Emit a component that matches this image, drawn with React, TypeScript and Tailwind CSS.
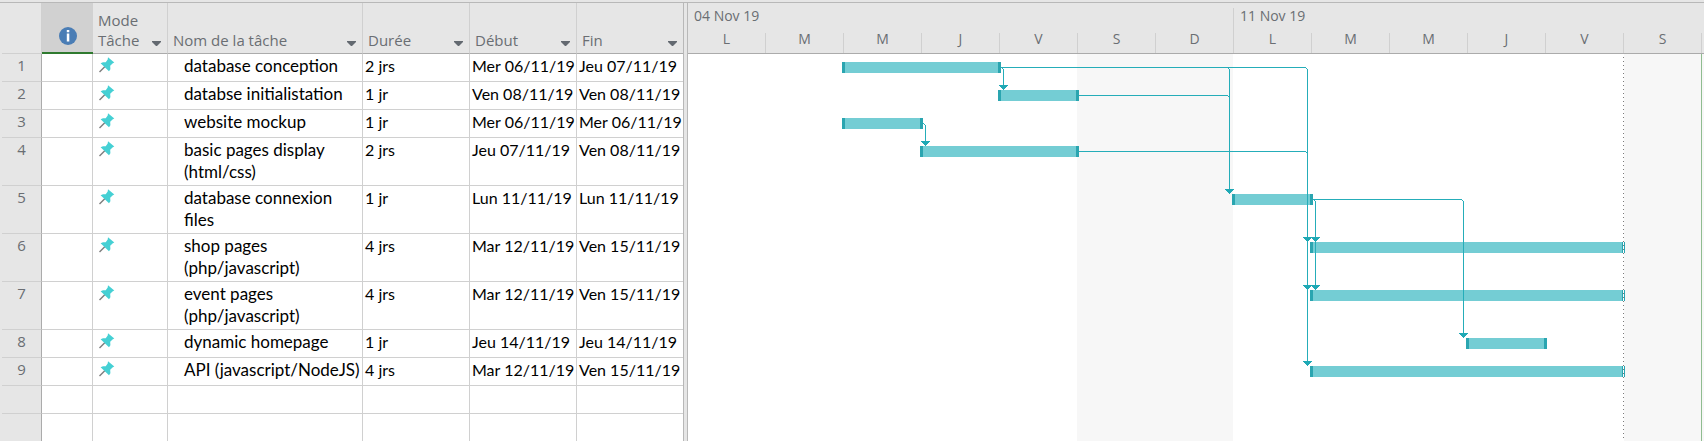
import React from "react";

type Task = {
  id: number;
  name: string;
  duration: string;
  start: string;
  end: string;
  tall?: boolean;
};

const tasks: Task[] = [
  { id: 1, name: "database conception", duration: "2 jrs", start: "Mer 06/11/19", end: "Jeu 07/11/19" },
  { id: 2, name: "databse initialistation", duration: "1 jr", start: "Ven 08/11/19", end: "Ven 08/11/19" },
  { id: 3, name: "website mockup", duration: "1 jr", start: "Mer 06/11/19", end: "Mer 06/11/19" },
  { id: 4, name: "basic pages display (html/css)", duration: "2 jrs", start: "Jeu 07/11/19", end: "Ven 08/11/19", tall: true },
  { id: 5, name: "database connexion files", duration: "1 jr", start: "Lun 11/11/19", end: "Lun 11/11/19", tall: true },
  { id: 6, name: "shop pages (php/javascript)", duration: "4 jrs", start: "Mar 12/11/19", end: "Ven 15/11/19", tall: true },
  { id: 7, name: "event pages (php/javascript)", duration: "4 jrs", start: "Mar 12/11/19", end: "Ven 15/11/19", tall: true },
  { id: 8, name: "dynamic homepage", duration: "1 jr", start: "Jeu 14/11/19", end: "Jeu 14/11/19" },
  { id: 9, name: "API (javascript/NodeJS)", duration: "4 jrs", start: "Mar 12/11/19", end: "Ven 15/11/19" },
];

const weeks = [
  { label: "04 Nov 19", days: ["L", "M", "M", "J", "V", "S", "D"] },
  { label: "11 Nov 19", days: ["L", "M", "M", "J", "V", "S"] },
];

const DAY = 78;

// Chart coordinates: x = 0 is Monday 04/11, y = 0 is the top of the first row.
const bars = [
  { id: 1, day: 2, span: 2, y: 8 },
  { id: 2, day: 4, span: 1, y: 36 },
  { id: 3, day: 2, span: 1, y: 64 },
  { id: 4, day: 3, span: 2, y: 92 },
  { id: 5, day: 7, span: 1, y: 140 },
  { id: 6, day: 8, span: 4, y: 188, atDeadline: true },
  { id: 7, day: 8, span: 4, y: 236, atDeadline: true },
  { id: 8, day: 10, span: 1, y: 284 },
  { id: 9, day: 8, span: 4, y: 312, atDeadline: true },
];

const links = [
  "M312 13H617L619 15V308",
  "M313 13L315 15V32",
  "M313 13H539L541 15V136",
  "M390 41H539L541 43",
  "M235 69L237 71V88",
  "M390 97H617L619 99",
  "M624 145H773L775 147V280",
  "M625 145L627 147V232",
];

const arrows = [
  [315, 31],
  [237, 87],
  [541, 135],
  [619, 183],
  [627, 183],
  [619, 231],
  [627, 231],
  [775, 279],
  [619, 307],
];

function Pin() {
  return (
    <svg width="16" height="16" viewBox="0 0 16 16" role="img" aria-label="Planifié manuellement" className="block">
      <path d="M0.5 15 L6 9.5" stroke="#7d7d7d" strokeWidth="1.5" />
      <path d="M9 0.3 L15.3 5.6 L13.8 6.2 L11.2 8.8 L11.4 12.2 L10 14.2 L1.6 6.2 L4 5.2 L6.7 5.2 L8.7 2.6 Z" fill="#45d0d4" />
    </svg>
  );
}

function HeaderCell({ label, className = "" }: { label: string; className?: string }) {
  return (
    <th scope="col" className={`h-[51px] border-r border-b border-r-[#d0d0d0] border-b-[#ababab] p-0 text-left align-bottom font-normal ${className}`}>
      <div className="flex items-end justify-between pr-1.5 pb-[3px] pl-[5px]">
        <span className="leading-5">{label}</span>
        <button type="button" aria-label={`Filtrer ${label}`} className="flex h-5 shrink-0 items-center pt-1.5">
          <svg width="9" height="5" viewBox="0 0 9 5" aria-hidden="true">
            <path d="M0 0H9V1L5 5H4L0 1Z" fill="#636970" />
          </svg>
        </button>
      </div>
    </th>
  );
}

function TaskTable() {
  const base = "border-r border-b border-[#d0d0d0] p-0 align-top";
  const cell = `${base} pt-px`;
  return (
    <div className="shrink-0 border-r border-[#b8b8b8] bg-white">
      <table className="w-[681px] table-fixed border-separate border-spacing-0 font-['Lato','Liberation_Sans',sans-serif] text-base leading-[22px] text-black">
        <colgroup>
          <col className="w-[40px]" />
          <col className="w-[51px]" />
          <col className="w-[75px]" />
          <col className="w-[195px]" />
          <col className="w-[107px]" />
          <col className="w-[107px]" />
          <col />
        </colgroup>
        <thead className="bg-[#e6e6e6] font-['Open_Sans','Noto_Sans',sans-serif] text-[15px] text-[#6a6e73]">
          <tr>
            <th className="border-r border-b border-r-[#d0d0d0] border-b-[#d0d0d0] p-0" aria-label="Ligne" />
            <th scope="col" className="border-b-2 border-[#2f7a2f] bg-[#d1d1d1] p-0 pt-6 align-top">
              <svg width="18" height="18" viewBox="0 0 18 18" role="img" aria-label="Indicateurs" className="mx-auto block">
                <circle cx="9" cy="9" r="9" fill="#4a7db5" />
                <path d="M7.8 3h2.5v2.2H7.8zM7.8 6.5h2.5v8H7.8z" fill="#fff" />
              </svg>
            </th>
            <HeaderCell label="Mode Tâche" />
            <HeaderCell label="Nom de la tâche" />
            <HeaderCell label="Durée" />
            <HeaderCell label="Début" />
            <HeaderCell label="Fin" className="border-r-0" />
          </tr>
        </thead>
        <tbody>
          {tasks.map((t) => (
            <tr key={t.id} className={t.tall ? "h-12" : "h-7"}>
              <th scope="row" className="border-r border-b border-r-[#ababab] border-b-[#d0d0d0] bg-[#e6e6e6] p-0 text-center align-top font-['Open_Sans','Noto_Sans',sans-serif] text-[15px] leading-[22px] font-normal text-[#6a6e73]">
                {t.id}
              </th>
              <td className={cell} />
              <td className={`${base} pt-[3px] pl-1.5`}>
                <Pin />
              </td>
              <td className={`${cell} pl-4 text-[17px]`}>{t.name}</td>
              <td className={`${cell} pl-0.5`}>{t.duration}</td>
              <td className={`${cell} pl-0.5 whitespace-nowrap`}>{t.start}</td>
              <td className={`${cell} border-r-0 pl-0.5 whitespace-nowrap`}>{t.end}</td>
            </tr>
          ))}
          {[10, 11].map((n) => (
            <tr key={n} className="h-7">
              <th className="border-r border-b border-r-[#ababab] border-b-[#d0d0d0] bg-[#e6e6e6] p-0" aria-label="Ligne vide" />
              {[0, 1, 2, 3, 4].map((c) => (
                <td key={c} className={cell} />
              ))}
              <td className={`${cell} border-r-0`} />
            </tr>
          ))}
        </tbody>
      </table>
    </div>
  );
}

function Chart() {
  return (
    <svg width="1017" height="387" viewBox="0 0 1017 387" shapeRendering="crispEdges" role="img" aria-label="Diagramme de Gantt" className="block">
      <rect x={5 * DAY - 1} y="0" width={2 * DAY} height="387" fill="#f7f7f7" />
      <rect x={12 * DAY} y="0" width="81" height="387" fill="#f7f7f7" />
      <path d="M1013.5 0V387" stroke="#8fbc8f" />
      {bars.map((b) => {
        const x = b.day * DAY - 2;
        const w = b.span * DAY + 3;
        return (
          <g key={b.id}>
            <rect x={x} y={b.y} width={w} height="11" fill="#74cdd4" />
            <rect x={x} y={b.y} width="3" height="11" fill="#2aa5b0" />
            <rect x={x + w - 3} y={b.y} width="3" height="11" fill="#2aa5b0" />
            {b.atDeadline && <path d={`M${x + w - 1.5} ${b.y}V${b.y + 11}`} stroke="#ffffff" />}
          </g>
        );
      })}
      <g transform="translate(0.5 0.5)" fill="none" stroke="#25adb9">
        {links.map((d) => (
          <path key={d} d={d} />
        ))}
      </g>
      {arrows.map(([x, y]) => (
        <path key={`${x}-${y}`} d={`M${x - 4} ${y}h9v1h-1v1h-1v1h-1v1h-1v1h-1v-1h-1v-1h-1v-1h-1v-1h-1z`} fill="#1fa9b5" />
      ))}
      <path d="M935.5 3V387" stroke="#7a7a7a" strokeDasharray="1 3" />
    </svg>
  );
}

function Timeline() {
  return (
    <div className="flex min-w-0 flex-1 flex-col overflow-hidden border-l border-[#b8b8b8] bg-white font-['Open_Sans','Noto_Sans',sans-serif] text-sm text-[#6a6e73]">
      <div className="flex h-[51px] shrink-0 border-b border-[#ababab] bg-[#e6e6e6]">
        {weeks.map((w, i) => (
          <div key={w.label} className="flex shrink-0 flex-col">
            <div className={i ? "mt-[5px] h-[25px] border-l border-[#d0d0d0] pl-1.5 leading-4" : "mt-[5px] h-[25px] pl-1.5 leading-4"}>{w.label}</div>
            <div className="flex">
              {w.days.map((d, j) => (
                <div
                  key={j}
                  className={
                    i === 0 && j === 0
                      ? "h-5 w-[77px] text-center leading-3"
                      : "h-5 w-[78px] border-l border-[#d0d0d0] text-center leading-3"
                  }
                >
                  {d}
                </div>
              ))}
            </div>
          </div>
        ))}
        <div className="mt-[30px] h-5 border-l border-[#d0d0d0]" />
      </div>
      <div className="flex-1 overflow-hidden">
        <Chart />
      </div>
    </div>
  );
}

export default function App() {
  return (
    <main className="flex h-screen flex-col overflow-hidden bg-[#e6e6e6] pt-0.5">
      <div className="flex min-h-0 flex-1 border-t border-[#b8b8b8] pl-0.5">
        <TaskTable />
        <div className="w-[3px] shrink-0 bg-[#e6e6e6]" />
        <Timeline />
      </div>
    </main>
  );
}
